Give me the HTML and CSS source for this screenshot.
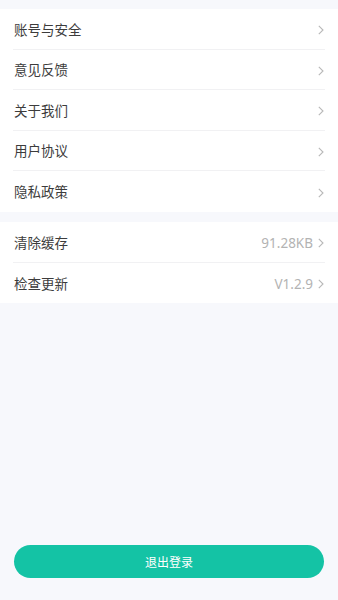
FILE: index.html
```html
<!DOCTYPE html>
<html lang="zh-CN">
<head>
<meta charset="utf-8">
<meta name="viewport" content="width=device-width, initial-scale=1">
<link rel="stylesheet" href="styles.css">
<title>设置</title>
</head>
<body>
<div class="page">
  <div class="card">
    <div class="row"><span class="label">账号与安全</span><span class="right"><svg class="chev" viewBox="0 0 6 10"><path d="M0.8 0.8 L5 5 L0.8 9.2"/></svg></span></div>
    <div class="row"><span class="label">意见反馈</span><span class="right"><svg class="chev" viewBox="0 0 6 10"><path d="M0.8 0.8 L5 5 L0.8 9.2"/></svg></span></div>
    <div class="row"><span class="label">关于我们</span><span class="right"><svg class="chev" viewBox="0 0 6 10"><path d="M0.8 0.8 L5 5 L0.8 9.2"/></svg></span></div>
    <div class="row"><span class="label">用户协议</span><span class="right"><svg class="chev" viewBox="0 0 6 10"><path d="M0.8 0.8 L5 5 L0.8 9.2"/></svg></span></div>
    <div class="row last"><span class="label">隐私政策</span><span class="right"><svg class="chev" viewBox="0 0 6 10"><path d="M0.8 0.8 L5 5 L0.8 9.2"/></svg></span></div>
  </div>
  <div class="card second">
    <div class="row"><span class="label">清除缓存</span><span class="right"><span class="value">91.28KB</span><svg class="chev" viewBox="0 0 6 10"><path d="M0.8 0.8 L5 5 L0.8 9.2"/></svg></span></div>
    <div class="row last"><span class="label">检查更新</span><span class="right"><span class="value">V1.2.9</span><svg class="chev" viewBox="0 0 6 10"><path d="M0.8 0.8 L5 5 L0.8 9.2"/></svg></span></div>
  </div>
  <div class="spacer"></div>
  <div class="footer">
    <button class="logout" type="button">退出登录</button>
  </div>
</div>
</body>
</html>
```
FILE: styles.css
```css
* { box-sizing: border-box; }
html, body {
  margin: 0;
  padding: 0;
  height: 100%;
  background: #f7f8fc;
  font-family: "Noto Sans", "Noto Sans CJK SC", sans-serif;
}
.page {
  display: flex;
  flex-direction: column;
  min-height: 600px;
  padding-top: 9px;
}
.card {
  background: #ffffff;
  padding: 0 13px 0 13px;
}
.card.second {
  margin-top: 10px;
}
.row {
  height: 40.6px;
  display: flex;
  align-items: center;
  justify-content: space-between;
  border-bottom: 1px solid #f1f1f3;
  padding: 3px 1px 0 1px;
}
.row.last {
  border-bottom: none;
}
.label {
  font-size: 13.5px;
  color: #3c3c3c;
  line-height: 1;
}
.right {
  display: flex;
  align-items: center;
  gap: 5px;
}
.value {
  font-size: 13.5px;
  color: #b3b3b3;
  line-height: 1;
}
.chev {
  width: 6px;
  height: 10px;
  fill: none;
  stroke: #b8b8b8;
  stroke-width: 1.1;
}
.spacer {
  flex: 1;
}
.footer {
  padding: 0 14px 22px 14px;
}
.logout {
  display: block;
  width: 100%;
  height: 33px;
  border: none;
  border-radius: 17px;
  background: #14c3a5;
  color: #ffffff;
  font-family: "Noto Sans CJK SC", sans-serif;
  font-size: 12px;
  letter-spacing: 0;
  padding: 0;
}
```
